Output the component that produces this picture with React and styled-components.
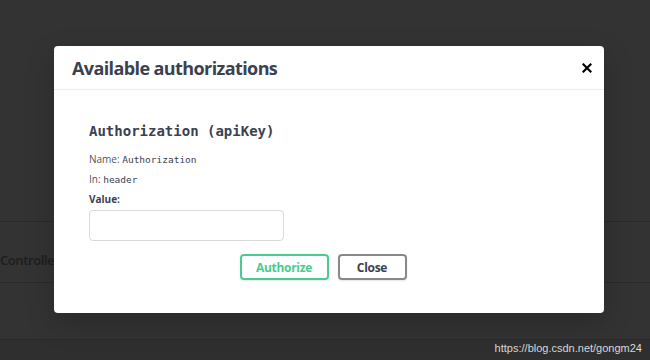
import React from 'react';
import styled, { createGlobalStyle } from 'styled-components';

const Global = createGlobalStyle`
  html, body {
    margin: 0;
    padding: 0;
    background: #333333;
  }
  body {
    font-family: "Open Sans", "Noto Sans", sans-serif;
    width: 650px;
    height: 360px;
    overflow: hidden;
  }
`;

const Page = styled.div`
  position: relative;
  width: 650px;
  height: 360px;
  display: flex;
  flex-direction: column;
  background: #333333;
`;

const Spacer = styled.div`
  height: ${p => p.h}px;
  flex: none;
`;

const OpRow = styled.div`
  height: 62px;
  flex: none;
  display: flex;
  align-items: center;
  padding-top: 16px;
  box-sizing: border-box;
  border-top: 1px solid #2a2a2a;
  border-bottom: 1px solid #2a2a2a;
  font-size: 13px;
  letter-spacing: -0.4px;
  color: #1e1e1e;
  font-family: "Open Sans", sans-serif;
  font-weight: 600;
`;

const Footer = styled.div`
  flex: 1;
  border-top: 1px solid #2a2a2a;
  background: #2f2f2f;
`;

const Watermark = styled.div`
  position: absolute;
  right: 8px;
  bottom: 6px;
  font-family: "Liberation Sans", Arial, sans-serif;
  font-size: 11px;
  color: #d8d8d8;
`;

const Modal = styled.div`
  position: absolute;
  left: 54px;
  top: 46px;
  width: 550px;
  height: 267px;
  background: #fff;
  border-radius: 4px;
  box-shadow: 0 10px 30px rgba(0, 0, 0, 0.2);
  display: flex;
  flex-direction: column;
`;

const Header = styled.div`
  height: 43px;
  display: flex;
  align-items: center;
  justify-content: space-between;
  padding: 0 9px 0 18px;
  border-bottom: 1px solid #ececec;
`;

const Title = styled.h3`
  margin: 0;
  font-size: 18px;
  font-weight: 700;
  letter-spacing: -0.6px;
  color: #3b4151;
`;

const CloseX = styled.button`
  border: none;
  background: none;
  padding: 0;
  width: 16px;
  height: 16px;
  display: flex;
  align-items: center;
  justify-content: center;
  cursor: pointer;
`;

const Body = styled.div`
  padding: 31px 35px 0 35px;
  display: flex;
  flex-direction: column;
`;

const SchemeTitle = styled.h4`
  margin: 0 0 10px;
  font-family: "DejaVu Sans Mono", monospace;
  font-size: 14px;
  font-weight: 700;
  line-height: 20px;
  color: #3b4151;
`;

const Info = styled.p`
  margin: 0 0 3px;
  font-size: 10px;
  line-height: 16px;
  color: #555;
`;

const Code = styled.code`
  font-family: "DejaVu Sans Mono", monospace;
  font-size: 9.5px;
  color: #3b4151;
`;

const Label = styled.label`
  margin: 0 0 3px;
  font-size: 10px;
  font-weight: 700;
  line-height: 16px;
  color: #3b4151;
`;

const Input = styled.input`
  box-sizing: border-box;
  width: 195px;
  height: 31px;
  border: 1px solid #d9d9d9;
  border-radius: 4px;
  background: #fff;
  outline: none;
`;

const Actions = styled.div`
  display: flex;
  justify-content: center;
  gap: 9px;
  margin-top: 13px;
  padding-right: 12px;
`;

const Btn = styled.button`
  box-sizing: border-box;
  height: 26px;
  width: ${p => p.w}px;
  border: 2px solid ${p => (p.primary ? '#49cc90' : '#888')};
  border-radius: 4px;
  background: #fff;
  color: ${p => (p.primary ? '#49cc90' : '#3b4151')};
  font-family: "Open Sans", sans-serif;
  font-size: 12px;
  font-weight: 700;
  letter-spacing: -0.3px;
  padding: 0;
  box-shadow: 0 1px 2px rgba(0, 0, 0, 0.1);
`;

export default function App() {
  return (
    <Page>
      <Global />
      <Spacer h={221} />
      <OpRow>Controller</OpRow>
      <Spacer h={56} />
      <Footer />
      <Watermark>https://blog.csdn.net/gongm24</Watermark>

      <Modal>
        <Header>
          <Title>Available authorizations</Title>
          <CloseX aria-label="close">
            <svg width="10" height="10" viewBox="0 0 10 10">
              <path d="M1.5 1.5 L8.5 8.5 M8.5 1.5 L1.5 8.5" stroke="#000" strokeWidth="2.2" strokeLinecap="square" />
            </svg>
          </CloseX>
        </Header>
        <Body>
          <SchemeTitle>Authorization (apiKey)</SchemeTitle>
          <Info>Name: <Code>Authorization</Code></Info>
          <Info>In: <Code>header</Code></Info>
          <Label>Value:</Label>
          <div><Input type="text" /></div>
          <Actions>
            <Btn primary w={89}>Authorize</Btn>
            <Btn w={69}>Close</Btn>
          </Actions>
        </Body>
      </Modal>
    </Page>
  );
}
